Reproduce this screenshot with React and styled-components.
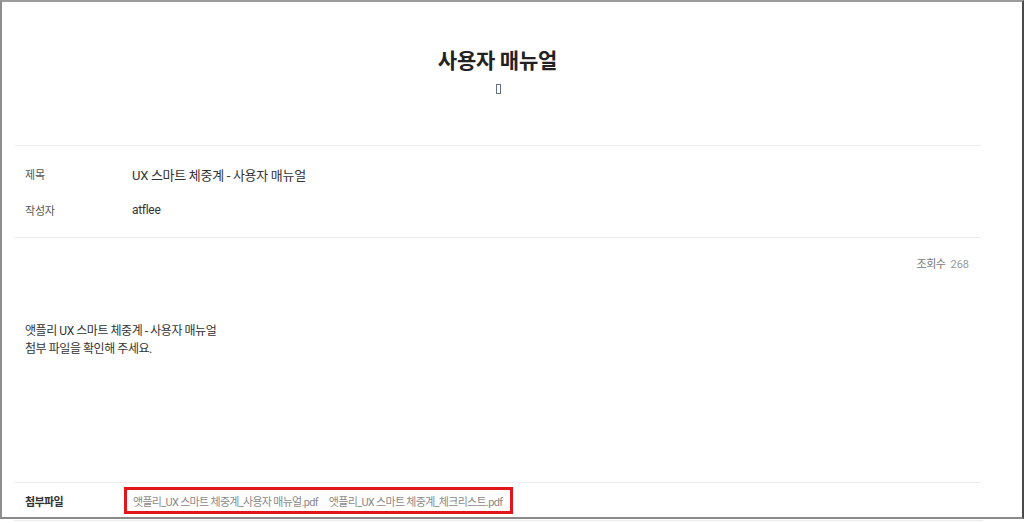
import React from "react";
import styled, { createGlobalStyle } from "styled-components";

const Global = createGlobalStyle`
  html, body { margin: 0; padding: 0; background: #fff; }
  body { font-family: Roboto, "Noto Sans CJK KR", "Noto Sans", sans-serif; color: #333; }
  * { box-sizing: border-box; }
`;

const Page = styled.div`
  width: 1024px;
  height: 523px;
  overflow: hidden;
  background: #fff;
`;

const Frame = styled.div`
  width: 1024px;
  height: 519px;
  border-top: 2px solid #9c9c9c;
  border-left: 2px solid #8e8e8e;
  border-right: 2px solid #4a4a4a;
  border-bottom: 2px solid #8a8a8a;
  padding: 0 41px 0 12px;
  display: flex;
  flex-direction: column;
`;

const Header = styled.header`
  height: 144px;
  display: flex;
  flex-direction: column;
  align-items: center;
  padding-top: 42px;
  border-bottom: 1px solid #ececec;
`;

const Title = styled.h1`
  margin: 0;
  font-family: "Noto Sans CJK KR", sans-serif;
  font-size: 21px;
  font-weight: 700;
  line-height: 30px;
  color: #222;
  letter-spacing: -0.2px;
`;

const Tofu = styled.span`
  display: inline-block;
  width: 5px;
  height: 10px;
  border: 1px solid #66708a;
  margin-top: 10px;
  margin-left: 1px;
`;

const Meta = styled.section`
  padding: 10px 0 9px;
  border-bottom: 1px solid #ececec;
`;

const Row = styled.div`
  display: flex;
  align-items: center;
  height: 36px;
  padding-left: 11px;
`;

const Label = styled.span`
  width: 107px;
  flex: none;
  color: ${p => (p.$bold ? "#333" : "#555")};
  font-family: "Noto Sans CJK KR", sans-serif;
  font-size: 11px;
  font-weight: ${p => (p.$bold ? 700 : 400)};
  letter-spacing: ${p => (p.$bold ? "-0.6px" : "-0.2px")};
`;

const Value = styled.span`
  color: #333;
  font-size: ${p => p.$size || "12px"};
  letter-spacing: -0.3px;
`;

const Body = styled.section`
  flex: 1;
  display: flex;
  flex-direction: column;
  border-bottom: 1px solid #ececec;
`;

const Views = styled.div`
  display: flex;
  justify-content: flex-end;
  gap: 5px;
  padding: 19px 12px 0 0;
  font-size: 11px;
  line-height: 16px;
  color: #777;
  letter-spacing: -0.5px;
`;

const Count = styled.span`
  color: #999;
  letter-spacing: 0;
`;

const Content = styled.div`
  padding: 49px 0 0 11px;
  font-size: 12px;
  line-height: 18px;
  color: #333;
  letter-spacing: -0.45px;
`;

const Files = styled.div`
  display: flex;
  align-items: center;
  gap: 11px;
  border: 3px solid #e3151c;
  margin-left: -8px;
  padding: 0 8px 0 6px;
  height: 27px;
  font-size: 11px;
  color: #8a8a8a;
  letter-spacing: -0.7px;
`;

const AttachRow = styled(Row)`
  height: 34px;
  padding-top: 1px;
`;

const Under = styled.div`
  margin: 1px 41px 0 14px;
  border-top: 1px solid #ececec;
`;

export default function App() {
  return (
    <Page>
      <Global />
      <Frame>
        <Header>
          <Title>사용자 매뉴얼</Title>
          <Tofu />
        </Header>
        <Meta>
          <Row>
            <Label>제목</Label>
            <Value $size="13px">UX 스마트 체중계 - 사용자 매뉴얼</Value>
          </Row>
          <Row>
            <Label>작성자</Label>
            <Value>atflee</Value>
          </Row>
        </Meta>
        <Body>
          <Views>
            <span>조회수</span>
            <Count>268</Count>
          </Views>
          <Content>
            앳플리 UX 스마트 체중계 - 사용자 매뉴얼
            <br />
            첨부 파일을 확인해 주세요.
          </Content>
        </Body>
        <AttachRow>
          <Label $bold>첨부파일</Label>
          <Files>
            <span>앳플리_UX 스마트 체중계_사용자 매뉴얼.pdf</span>
            <span>앳플리_UX 스마트 체중계_체크리스트.pdf</span>
          </Files>
        </AttachRow>
      </Frame>
      <Under />
    </Page>
  );
}
